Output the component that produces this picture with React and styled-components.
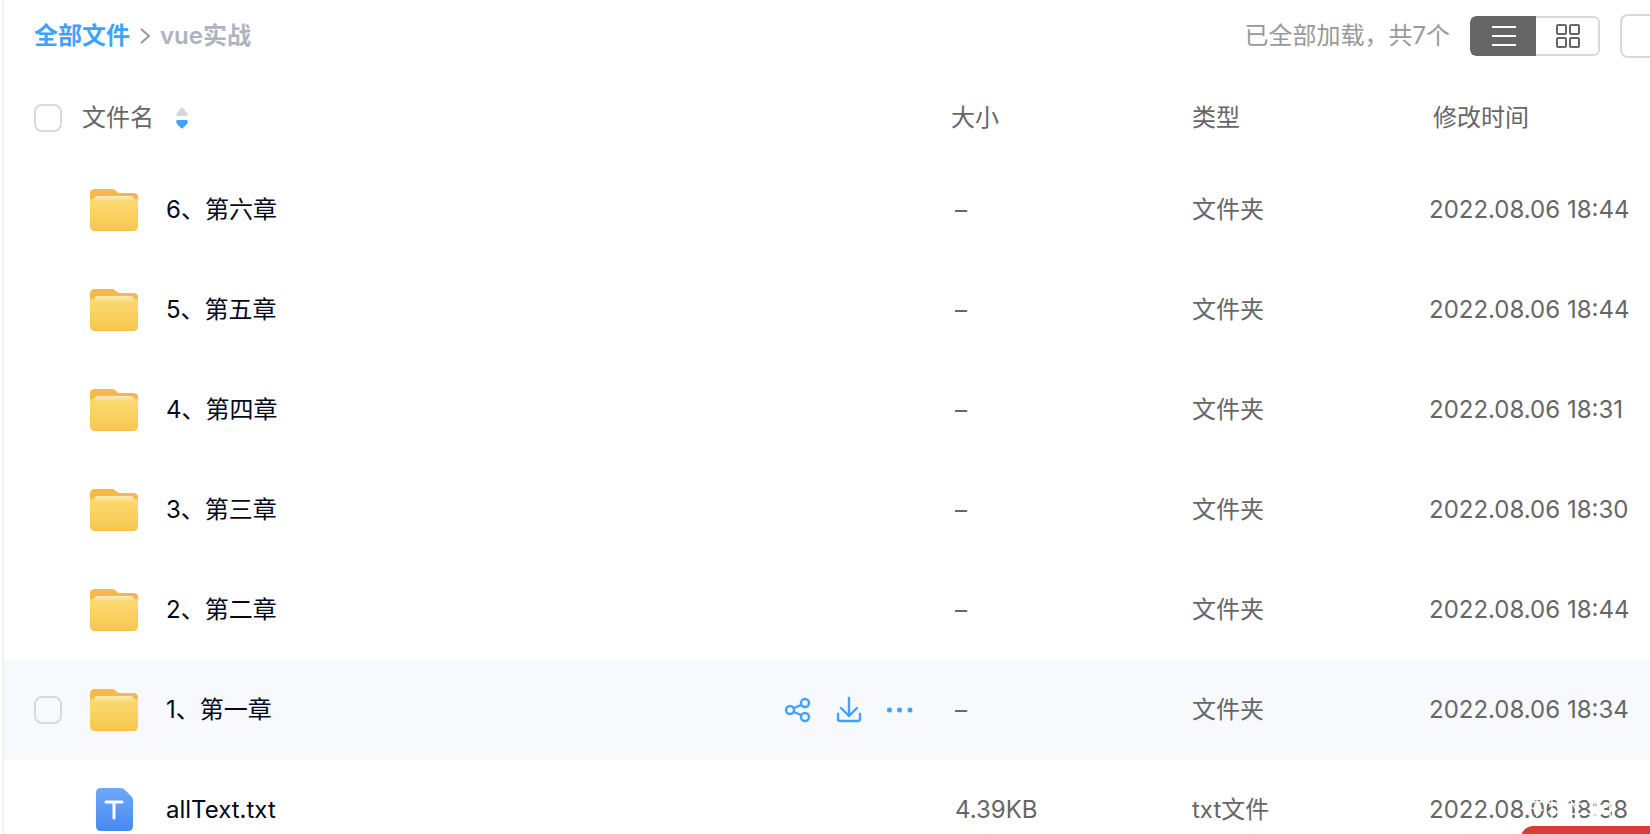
import React from "react";
import styled, { createGlobalStyle } from "styled-components";

const GlobalStyle = createGlobalStyle`
	* {
		box-sizing: border-box;
	}
	body {
		margin: 0;
		background-color: #fff;
		overflow: hidden;
		font-family: Inter, "Noto Sans CJK SC", sans-serif;
		font-size: 24px;
		line-height: 36px;
		color: #666;
	}
	button {
		font: inherit;
		padding: 0;
		border: 0;
		background: none;
		cursor: pointer;
	}
`;

const Main = styled.main`
	position: relative;
	height: 100vh;
	min-width: 1200px;
	margin-left: 2px;
	border-left: 2px solid #f1f2f4;
	overflow: hidden;
`;

const Toolbar = styled.header`
	display: flex;
	align-items: center;
	height: 72px;
	padding-left: 30px;
`;

const Breadcrumb = styled.nav`
	display: flex;
	align-items: center;
	gap: 8px;
	flex: 1;
	font-weight: 600;
	color: #afb3bf;

	a {
		color: #40a2ff;
		text-decoration: none;
	}
`;

const LoadedCount = styled.span`
	color: #999;
	margin-right: 20px;
`;

const ViewSwitch = styled.div`
	display: flex;
	width: 130px;
	height: 40px;
	border-radius: 6px;
	overflow: hidden;
`;

const ViewButton = styled.button`
	display: flex;
	align-items: center;
	justify-content: center;
	width: ${props => props.$active ? "66px" : "64px"};
	padding-left: 2px;
	color: ${props => props.$active ? "#fff" : "#666"};
	background-color: ${props => props.$active ? "#666" : "#fff"};
	border: ${props => props.$active ? "0" : "2px solid #d9d9d9"};
	border-left: 0;
	border-radius: ${props => props.$active ? "6px 0 0 6px" : "0 6px 6px 0"};
`;

const SearchInput = styled.input`
	width: 30px;
	height: 44px;
	margin-left: 20px;
	border: 2px solid #d9d9d9;
	border-right: 0;
	border-radius: 8px 0 0 8px;
	outline: 0;
`;

const FileTable = styled.table`
	width: 100%;
	border-collapse: collapse;
	table-layout: fixed;

	th, td {
		padding: 0;
		text-align: left;
		font-weight: 400;
	}
	th {
		height: 88px;
		padding-top: 3px;
	}
	th:last-child {
		padding-left: 4px;
	}
	td {
		height: 100px;
	}
`;

const Column = styled.col`
	width: ${props => props.$width}px;
`;

const Checkbox = styled.input`
	display: block;
	appearance: none;
	width: 28px;
	height: 28px;
	margin: 0 0 0 30px;
	border: 2px solid #d9d9d9;
	border-radius: 8px;
	background-color: transparent;
`;

const SortButton = styled.button`
	display: flex;
	align-items: center;
	gap: 22px;
	color: #666;
`;

const FileRow = styled.tr`
	background-color: ${props => props.$hover ? "#f7f9fd" : "transparent"};
`;

const FileCell = styled.div`
	display: flex;
	align-items: center;
	padding-left: 6px;
	padding-right: 37px;
	gap: 26px;
	color: #03081a;

	span {
		flex: 1;
	}
`;

const Actions = styled.div`
	display: flex;
	gap: 23px;

	button {
		display: flex;
		color: #40a2ff;
	}
`;

const Size = styled.div`
	padding-left: 4px;
`;

const Banner = styled.div`
	position: absolute;
	right: 0;
	bottom: -32px;
	width: 129px;
	height: 40px;
	background-color: #d93e35;
	border-radius: 12px 0 0 0;
`;

const Watermark = styled.svg`
	position: absolute;
	right: 26px;
	bottom: 14px;
	pointer-events: none;
`;

const FolderIcon = () => (
	<svg width="52" height="44" viewBox="0 0 52 44" aria-hidden="true">
		<defs>
			<linearGradient id="folder" x1="0" y1="0" x2="0" y2="1">
				<stop offset="0" stopColor="#fbda70" />
				<stop offset="0.94" stopColor="#f8c851" />
				<stop offset="1" stopColor="#f5ba4b" />
			</linearGradient>
			<linearGradient id="paper" x1="0" y1="0" x2="0" y2="1">
				<stop offset="0" stopColor="#fcebc0" />
				<stop offset="1" stopColor="#fbdb78" />
			</linearGradient>
		</defs>
		<path d="M2 6q0-5 5-5h17q2 0 3 1l2 2q1 1 3 1h13q5 0 5 5v8H2z" fill="#f6b848" />
		<path d="M2 11h48v27q0 5-5 5H7q-5 0-5-5z" fill="url(#folder)" />
		<path d="M2 6v5h4q1-3 4-3h32q3 0 4 3h4v-1q0-3-2-4z" fill="#f6b848" />
		<path d="M6 13v-1q0-4 4-4h32q4 0 4 4v1z" fill="url(#paper)" />
	</svg>
);

const TextFileIcon = () => (
	<svg width="52" height="44" viewBox="0 0 52 44" aria-hidden="true">
		<defs>
			<linearGradient id="textfile" x1="0" y1="0" x2="0" y2="1">
				<stop offset="0" stopColor="#70a7f8" />
				<stop offset="1" stopColor="#468af2" />
			</linearGradient>
		</defs>
		<path d="M8 5q0-5 5-5h20q2 0 4 2l6 6q2 2 2 4v26q0 5-5 5H13q-5 0-5-5z" fill="url(#textfile)" />
		<path d="M18 14h16M26 14v16" stroke="#fff" strokeWidth="3" strokeLinecap="round" />
	</svg>
);

const ShareIcon = () => (
	<svg width="28" height="28" viewBox="0 0 28 28" fill="none" stroke="currentColor" strokeWidth="2.4">
		<circle cx="6" cy="14" r="4" />
		<circle cx="21" cy="7" r="4" />
		<circle cx="21" cy="21" r="4" />
		<path d="M10 12l7-3M10 16l7 3" />
	</svg>
);

const DownloadIcon = () => (
	<svg width="28" height="28" viewBox="0 0 28 28" fill="none" stroke="currentColor" strokeWidth="2.4" strokeLinecap="round" strokeLinejoin="round">
		<path d="M14 2v18M6 12l8 8 8-8" />
		<path d="M3 18v5q0 2 2 2h18q2 0 2-2v-5" />
	</svg>
);

const MoreIcon = () => (
	<svg width="28" height="28" viewBox="0 0 28 28" fill="currentColor">
		<circle cx="3.5" cy="14" r="2.5" />
		<circle cx="13.5" cy="14" r="2.5" />
		<circle cx="24" cy="14" r="2.5" />
	</svg>
);

const files = [
	{ name: "6、第六章", size: "–", type: "文件夹", time: "2022.08.06 18:44" },
	{ name: "5、第五章", size: "–", type: "文件夹", time: "2022.08.06 18:44" },
	{ name: "4、第四章", size: "–", type: "文件夹", time: "2022.08.06 18:31" },
	{ name: "3、第三章", size: "–", type: "文件夹", time: "2022.08.06 18:30" },
	{ name: "2、第二章", size: "–", type: "文件夹", time: "2022.08.06 18:44" },
	{ name: "1、第一章", size: "–", type: "文件夹", time: "2022.08.06 18:34", hover: true },
	{ name: "allText.txt", size: "4.39KB", type: "txt文件", time: "2022.08.06 18:38", text: true },
];

const App = () => {
	return (
		<React.Fragment>
			<GlobalStyle />
			<Main>
				<Toolbar>
					<Breadcrumb>
						<a href="#all">全部文件</a>
						<svg width="14" height="18" viewBox="0 0 14 18" fill="none" stroke="#999" strokeWidth="2" aria-hidden="true">
							<path d="M3 2l8 7-8 7" />
						</svg>
						<span>vue实战</span>
					</Breadcrumb>
					<LoadedCount>已全部加载，共7个</LoadedCount>
					<ViewSwitch>
						<ViewButton $active aria-label="列表">
							<svg width="24" height="20" viewBox="0 0 24 20" stroke="currentColor" strokeWidth="2">
								<path d="M0 1h24M0 10h24M0 19h24" />
							</svg>
						</ViewButton>
						<ViewButton aria-label="网格">
							<svg width="24" height="24" viewBox="0 0 24 24" fill="none" stroke="currentColor" strokeWidth="2">
								<rect x="1" y="1" width="9" height="9" rx="1" />
								<rect x="14" y="1" width="9" height="9" rx="1" />
								<rect x="1" y="14" width="9" height="9" rx="1" />
								<rect x="14" y="14" width="9" height="9" rx="1" />
							</svg>
						</ViewButton>
					</ViewSwitch>
					<SearchInput type="text" aria-label="搜索" />
				</Toolbar>
				<FileTable>
					<colgroup>
						<Column $width={78} />
						<col />
						<Column $width={241} />
						<Column $width={237} />
						<Column $width={221} />
					</colgroup>
					<thead>
						<tr>
							<th><Checkbox type="checkbox" aria-label="全选" /></th>
							<th>
								<SortButton>
									文件名
									<svg width="12" height="22" viewBox="0 0 12 22" aria-hidden="true">
										<path d="M5 1q1-1 2 0l4 5q2 3-1 3H2q-3 0-1-3z" fill="#d4d6de" />
										<path d="M5 21q1 1 2 0l4-4q2-4-1-4H2q-3 0-1 4z" fill="#40a2ff" />
									</svg>
								</SortButton>
							</th>
							<th>大小</th>
							<th>类型</th>
							<th>修改时间</th>
						</tr>
					</thead>
					<tbody>
						{files.map(file => (
							<FileRow key={file.name} $hover={file.hover}>
								<td>{file.hover && <Checkbox type="checkbox" aria-label={file.name} />}</td>
								<td>
									<FileCell>
										{file.text ? <TextFileIcon /> : <FolderIcon />}
										<span>{file.name}</span>
										{file.hover && (
											<Actions>
												<button aria-label="分享"><ShareIcon /></button>
												<button aria-label="下载"><DownloadIcon /></button>
												<button aria-label="更多"><MoreIcon /></button>
											</Actions>
										)}
									</FileCell>
								</td>
								<td><Size>{file.size}</Size></td>
								<td>{file.type}</td>
								<td>{file.time}</td>
							</FileRow>
						))}
					</tbody>
				</FileTable>
				{/* thin white mark lying over the last date */}
				<Watermark width="96" height="22" viewBox="0 0 96 22" fill="none" stroke="#fff" strokeWidth="1.4" aria-hidden="true">
					<path d="M2 4h14M9 1v18M3 10l12 2M20 5h14M24 1v19M30 3v15M20 14h14M40 6h14M42 1l10 18M40 16h14M60 4h14M62 10h12M67 1v19M60 16h14M78 6h8M82 1v19M77 13h10" />
				</Watermark>
				<Banner />
			</Main>
		</React.Fragment>
	);
};

export default App;
